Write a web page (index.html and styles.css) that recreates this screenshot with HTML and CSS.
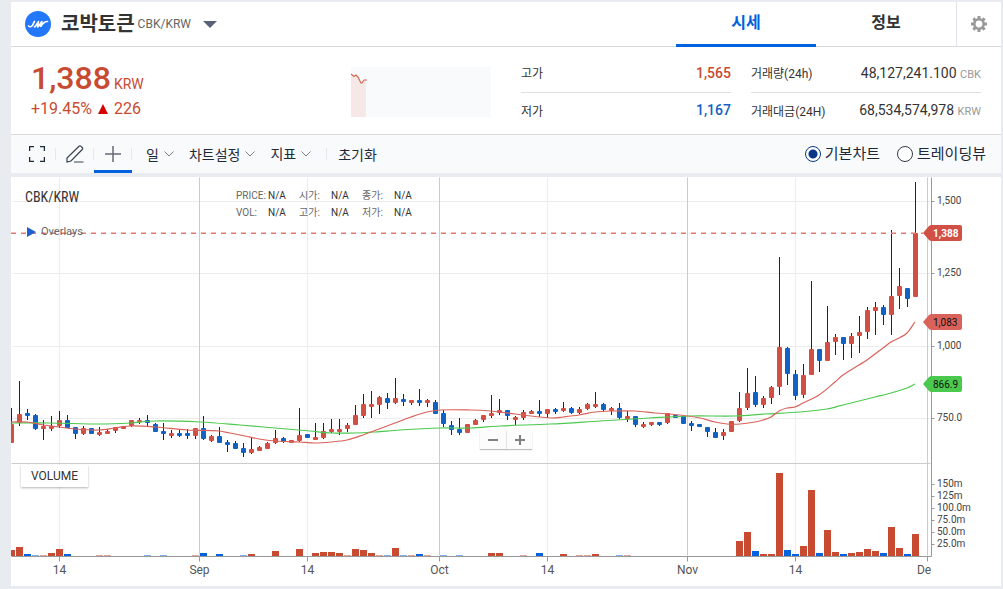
FILE: index.html
```html
<!DOCTYPE html>
<html lang="ko">
<head>
<meta charset="utf-8">
<meta name="viewport" content="width=device-width, initial-scale=1">
<title>코박토큰 CBK/KRW</title>
<link rel="stylesheet" href="styles.css">
</head>
<body>
<main class="page">
  <section class="panel">
    <header class="head">
      <svg class="logo" viewBox="0 0 26 26" aria-hidden="true">
        <circle cx="13" cy="13" r="13" fill="#2377fb"/>
        <path d="M3.600 15c1.200 1.200 3 1 4-.8l1.900-3.800M9.500 15.800c.8 0 1.600-1.600 4-5.200l-.9 5.200c1.100-.2 2.200-2.400 4.300-5.200l-1 4.800c1.600-2.600 3.300-5.200 6.600-4.900" fill="none" stroke="#fff" stroke-width="1.700" stroke-linecap="round" stroke-linejoin="round"/>
      </svg>
      <h1 class="name">코박토큰</h1>
      <span class="pair">CBK/KRW</span>
      <button class="pick" aria-label="코인 선택"><svg width="14" height="7" viewBox="0 0 14 7"><path d="M0 0h14L7 7z" fill="#5a6275"/></svg></button>
      <nav class="tabs">
        <button class="tab tab-on">시세</button>
        <button class="tab">정보</button>
      </nav>
      <button class="gear" aria-label="설정">
        <svg width="16" height="16" viewBox="0 0 16 16"><circle cx="8" cy="8" r="4.700" fill="none" stroke="#999" stroke-width="2.600"/><path d="M8 0v3M8 13v3M0 8h3M13 8h3M2.350 2.350l2.100 2.100M11.550 11.550l2.100 2.100M2.350 13.650l2.100-2.100M11.550 4.450l2.100-2.100" stroke="#999" stroke-width="3"/></svg>
      </button>
    </header>

    <div class="summary">
      <div class="quote">
        <div class="price">1,388<span class="unit">KRW</span></div>
        <div class="change"><span>+19.45%</span><svg width="10" height="10" viewBox="0 0 10 10" aria-hidden="true"><path d="M5 0l5 10H0z" fill="#d60000"/></svg><span>226</span></div>
      </div>
      <svg class="spark" viewBox="0 0 140 50" aria-hidden="true">
        <rect width="140" height="50" fill="#f9fafc"/>
        <path d="M0 7l3 3 2-2 3 4 2 4h1l2-3h2V50H0z" fill="#f5e8e6"/>
        <path d="M0 7l3 2.500 2-1.500 2 2 3 6h1l2-3h3" fill="none" stroke="#d16450" stroke-width="1.200"/>
      </svg>
      <dl class="stats range">
        <div class="stat"><dt>고가</dt><dd class="up">1,565</dd></div>
        <div class="stat"><dt>저가</dt><dd class="down">1,167</dd></div>
      </dl>
      <dl class="stats totals">
        <div class="stat"><dt>거래량(24h)</dt><dd>48,127,241.100 <small>CBK</small></dd></div>
        <div class="stat"><dt>거래대금(24H)</dt><dd>68,534,574,978 <small>KRW</small></dd></div>
      </dl>
    </div>

    <div class="toolbar">
      <button class="tool" aria-label="전체화면"><svg width="16" height="16" viewBox="0 0 16 16"><path d="M.5 5V.5H5M11 .5h4.500V5M15.500 11v4.500H11M5 15.500H.5V11" fill="none" stroke="#1c2a3a" stroke-width="1.500"/></svg></button>
      <button class="tool" aria-label="그리기"><svg width="18" height="18" viewBox="0 0 18 18"><path d="M1 17v-4L13 1.300q1-1 2 0l1.200 1.200q1 1 0 2L5 16z M8 17h9.500" fill="none" stroke="#3a4350" stroke-width="1.200"/></svg></button>
      <button class="tool tool-on" aria-label="십자선"><svg width="16" height="16" viewBox="0 0 16 16"><path d="M8 0v16M0 8h16" stroke="#666a77" stroke-width="1.500"/></svg></button>
      <button class="menu">일<svg class="chev" viewBox="0 0 10 6"><path d="M.5.5L5 5 9.500.5"/></svg></button>
      <button class="menu">차트설정<svg class="chev" viewBox="0 0 10 6"><path d="M.5.5L5 5 9.500.5"/></svg></button>
      <button class="menu menu-last">지표<svg class="chev" viewBox="0 0 10 6"><path d="M.5.5L5 5 9.500.5"/></svg></button>
      <button class="menu reset">초기화</button>
      <div class="modes">
        <label class="mode"><input type="radio" name="mode" checked>기본차트</label>
        <label class="mode"><input type="radio" name="mode">트레이딩뷰</label>
      </div>
    </div>
  </section>

  <section class="chart">
    <svg id="plot" class="plot" viewBox="11 177 990 409" role="img" aria-label="CBK/KRW 일봉 차트"></svg>
    <div class="symbol">CBK/KRW</div>
    <button class="overlays"><svg width="9" height="10" viewBox="0 0 9 10"><path d="M0 0l9 5-9 5z" fill="#1f5fd0"/></svg>Overlays</button>
    <dl class="legend">
      <dt>PRICE:</dt><dd>N/A</dd><dt>시가:</dt><dd>N/A</dd><dt>종가:</dt><dd>N/A</dd>
      <dt>VOL:</dt><dd>N/A</dd><dt>고가:</dt><dd>N/A</dd><dt>저가:</dt><dd>N/A</dd>
    </dl>
    <div class="volume">VOLUME</div>
    <div class="zoom">
      <button aria-label="축소"><svg width="10" height="10" viewBox="0 0 10 10"><path d="M0 5h10"/></svg></button>
      <button aria-label="확대"><svg width="10" height="10" viewBox="0 0 10 10"><path d="M0 5h10M5 0v10"/></svg></button>
    </div>
  </section>
</main>
<script src="chart.js"></script>
</body>
</html>
```

FILE: styles.css
```css
* { box-sizing: border-box; }

body {
  margin: 0;
  background: #e8ebf0;
  color: #333;
  font-family: Roboto, "Noto Sans CJK KR", sans-serif;
}

button {
  margin: 0;
  padding: 0;
  border: 0;
  background: none;
  color: inherit;
  font: inherit;
  cursor: pointer;
}

svg { display: block; }
dl, dd, h1 { margin: 0; }

.page {
  display: flex;
  flex-direction: column;
  gap: 4px;
  padding: 2px 2px 3px 11px;
}

.panel { background: #fff; }

.head {
  display: flex;
  align-items: center;
  height: 45px;
  padding-left: 14px;
  border-bottom: 1px solid #d9dadc;
}
.logo { width: 26px; height: 26px; }
.name {
  margin-left: 10px;
  font-size: 20px;
  line-height: 28px;
  font-weight: 700;
}
.pair { margin-left: 3px; font-size: 12px; color: #666; }
.pick { margin-left: 12px; }

.tabs { display: flex; align-self: stretch; margin-left: auto; }
.tab {
  width: 140px;
  height: 45px;
  border-bottom: 3px solid transparent;
  font-size: 16px;
  line-height: 38px;
  font-weight: 700;
}
.tab-on { border-bottom-color: #0062df; color: #0062df; }
.gear {
  display: grid;
  place-items: center;
  align-self: stretch;
  width: 45px;
  border-left: 1px solid #e0e2e7;
}

.summary {
  display: flex;
  height: 88px;
  padding: 0 20px;
  border-bottom: 1px solid #d9dadc;
}
.quote { width: 320px; padding-top: 12px; color: #c84a31; }
.price { height: 38px; font-size: 32px; line-height: 38px; font-weight: 500; }
.unit { margin-left: 3px; font-size: 14px; font-weight: 400; }
.change {
  display: flex;
  align-items: center;
  gap: 6px;
  height: 24px;
  font-size: 16px;
  line-height: 24px;
}
.spark { width: 140px; height: 50px; margin-top: 20px; }
.stats { margin-top: 8px; }
.range { width: 210px; margin-left: auto; }
.totals { width: 230px; margin-left: 20px; }
.stat {
  display: flex;
  align-items: center;
  justify-content: space-between;
  height: 34px;
  font-size: 14px;
}
.stat:first-child { height: 38px; padding-bottom: 2px; border-bottom: 1px solid #dfe0e6; }
.stat dt { font-size: 12px; }
.stat small { font-size: 11px; color: #999; }
.up { color: #c84a31; font-weight: 500; }
.down { color: #1261c4; font-weight: 500; }

.toolbar {
  display: flex;
  align-items: center;
  height: 38px;
  padding: 0 15px 0 7px;
  background: #f9fafc;
  color: #1c2a3a;
  font-size: 14px;
}
.tool {
  position: relative;
  display: grid;
  place-items: center;
  width: 38px;
  height: 38px;
}
.tool::after {
  content: "";
  position: absolute;
  top: 13px;
  right: 0;
  width: 1px;
  height: 12px;
  background: #e6e8ec;
}
.tool-on { border-top: 3px solid transparent; border-bottom: 3px solid #0062df; }
.tool-on::after { top: 10px; }
.menu {
  display: flex;
  align-items: center;
  gap: 5px;
  margin-left: 15px;
}
.tool-on + .menu { margin-left: 14px; }
.chev {
  width: 10px;
  height: 6px;
  fill: none;
  stroke: #7b808a;
}
.menu-last { padding-right: 15px; border-right: 1px solid #e6e8ec; line-height: 12px; }
.reset { margin-left: 11px; }
.modes { display: flex; gap: 17px; margin-left: auto; }
.mode {
  display: flex;
  align-items: center;
  gap: 4px;
  font-size: 15px;
  line-height: 20px;
}
.mode input {
  appearance: none;
  width: 16px;
  height: 16px;
  margin: 0;
  border: 1px solid #333a48;
  border-radius: 50%;
  background: #fff;
}
.mode input:checked {
  border-color: #093687;
  background: radial-gradient(circle, #093687 4px, #fff 5px);
}

.chart { position: relative; background: #fff; }
.plot { width: 100%; height: auto; font-family: Roboto, sans-serif; }
.grid { stroke: #ececec; }
.major { stroke: #ccc; }
.axis { stroke: #999; }
.wick { stroke: #1c2430; }
.rise { fill: #d14f44; }
.fall { fill: #1261c4; }
.vol-rise { fill: #c84a31; }
.vol-fall { fill: #0062df; }
.faint { opacity: .5; }
.avg { fill: none; stroke-width: 1.2; }
.avg-short { stroke: #d9625a; }
.avg-long { stroke: #4bc94f; }
.last { stroke: #df7a70; stroke-width: 1.4; stroke-dasharray: 5 5; }
.tick { font-size: 10px; fill: #444; }
.date { font-size: 12px; fill: #555; text-anchor: middle; }
.flag-last { fill: #d14f44; }
.flag-short { fill: #d9625a; }
.flag-long { fill: #4bc94f; }
.flag-text { font-size: 10px; fill: #111; }
.flag-text-last { fill: #fff; font-weight: 700; }

.symbol {
  position: absolute;
  top: 12px;
  left: 14px;
  font-family: "Roboto Condensed", Roboto, sans-serif;
  font-size: 14px;
  line-height: 16px;
}
.overlays {
  position: absolute;
  top: 47px;
  left: 16px;
  display: flex;
  align-items: center;
  gap: 5px;
  font-size: 11px;
  line-height: 16px;
  color: #666;
}
.legend {
  position: absolute;
  top: 10px;
  left: 225px;
  display: grid;
  grid-template-columns: repeat(3, 32px 31px);
  font-size: 10px;
  line-height: 17px;
}
.legend dt { color: #666; }
.volume {
  position: absolute;
  top: 288px;
  left: 10px;
  padding: 0 10px;
  background: #fff;
  box-shadow: 0 1px 2px rgba(0, 0, 0, .3);
  font-size: 12px;
  line-height: 22px;
}
.zoom {
  position: absolute;
  top: 254px;
  left: 469px;
  display: flex;
  background: #fcfcfc;
  box-shadow: 0 1px 1px rgba(0, 0, 0, .25);
}
.zoom button { display: grid; place-items: center; width: 26px; height: 18px; }
.zoom button + button { border-left: 1px solid #e4e4e4; }
.zoom path { stroke: #808080; stroke-width: 2; }
```

FILE: chart.js
```js
// One entry per day: high, body top, body bottom, low, direction (r = rise, f = fall), volume.
const days = `
408 424 443 443 r 6|381 414 423 426 r 9|409 413 416 420 f 2|414 415 429 430 f 1|420 426 429 440 r 1|416 426 429 431 r 3
411 420 426 428 r 7|415 420 428 428 f 2|427 427 434 439 f 0|426 428 434 435 r 0|428 428 434 434 f 0|427 432 435 436 r 1
429 431 434 434 r 1|427 427 431 433 r 0|426 426 429 429 r 0|420 420 426 427 r 0|418 420 422 424 r 0|415 420 423 426 f 1
423 424 432 432 f 0|423 431 434 440 f 1|430 433 436 438 r 0|430 433 436 437 f 0|429 433 436 439 f 0|428 428 436 439 r 1
416 428 439 440 f 3|435 436 441 442 r 0|427 436 443 443 f 2|440 442 445 452 f 0|441 443 449 449 f 0|443 448 453 457 f 1
438 449 453 454 r 2|446 447 451 451 r 0|442 443 449 449 r 0|430 438 443 444 r 5|437 438 442 443 f 0|440 440 443 443 r 0
408 435 441 442 r 7|434 434 438 438 f 0|423 437 440 440 r 3|423 431 438 439 r 4|419 429 432 433 r 4|419 429 432 435 r 3
423 425 429 432 r 1|405 415 425 425 r 7|394 404 416 418 r 6|391 404 407 418 r 3|396 397 405 414 r 1|393 398 403 409 f 1
378 398 403 404 r 8|394 399 402 406 f 1|400 400 403 405 r 1|389 400 403 406 f 2|399 400 403 407 r 1|400 402 414 414 f 0
410 413 424 427 f 1|421 425 430 435 f 0|418 429 433 435 f 1|424 424 433 433 r 0|419 420 425 425 r 0|415 415 420 422 r 0
395 413 416 418 r 3|399 410 413 415 r 3|410 410 416 420 f 0|416 417 420 425 r 0|410 412 418 420 r 1|410 411 414 414 r 0
400 411 414 417 f 3|409 409 414 418 r 0|408 409 412 414 f 0|402 408 411 412 r 2|407 408 413 414 f 0|407 409 413 414 r 1
403 404 409 410 r 1|392 404 407 408 r 2|403 404 410 411 f 0|407 408 411 415 r 0|403 408 418 419 f 1|411 416 419 422 r 1
416 416 425 427 f 0|422 424 427 428 r 0|422 422 425 426 r 0|422 422 425 426 f 0|413 413 423 424 r 0|415 415 418 418 f 0
416 416 424 424 f 0|421 423 426 431 f 0|424 424 427 427 f 0|427 427 432 437 f 0|428 432 438 438 f 0|429 432 436 440 r 0
421 421 432 432 r 0|392 408 421 422 r 15|368 393 408 410 r 24|376 392 405 407 f 5|396 398 405 408 r 2|386 387 398 404 r 2
257 347 387 395 r 83|347 348 374 385 f 6|370 374 396 400 f 2|364 375 395 398 r 10|281 349 375 375 r 66|349 349 361 372 f 3
306 342 361 361 r 26|334 337 342 355 r 4|337 337 344 360 f 2|333 336 344 358 r 3|316 332 336 353 r 4|307 310 332 339 r 7
302 307 311 335 r 5|305 307 315 325 f 3|230 296 315 335 r 29|268 286 296 309 r 8|288 288 299 307 f 2|182 233 297 297 r 22`
  .trim().split(/[|\n]/).map(d => d.split(' '));

const shortAvg = '11,422 27,422 43,425 59,427 75,429 99,430 115,428 131,426 155,427 187,430 219,431 230,433 245,436 259,439 275,441 299,442 315,443 331,442 347,440 363,435 379,429 395,423 411,417 427,412 440,410 470,410 490,411 515,414 540,417 552,418 563,417 579,415 595,412 611,411 635,411 655,413 680,415 700,418 715,422 727,424 740,424 755,422 763,420 771,417 779,411 787,408 795,407 803,403 819,395 835,382 843,375 859,365 867,360 883,348 891,342 899,338 907,333 915,322';
const longAvg = '11,423 50,423 100,424 130,423 155,421 200,422 240,425 275,428 310,431 331,433 355,433 375,432 400,430 440,428 470,428 500,426 550,424 600,421 650,418 690,416 735,416 765,414 800,412 827,409 843,405 859,401 875,397 891,393 907,388 915,384';

const line = (x1, y1, x2, y2, cls) => `<path class="${cls}" d="M${x1 + .5} ${y1 + .5}L${x2 + .5} ${y2 + .5}"/>`;
const text = (x, y, s, cls) => `<text x="${x}" y="${y}" class="${cls}">${s}</text>`;

// Smooth curve through a list of "x,y" points.
const curve = (list, cls) => {
  const p = list.split(' ').map(s => s.split(',').map(Number));
  let d = `M${p[0]}`;
  for (let i = 0; i < p.length - 1; i++) {
    const a = p[i - 1] || p[i], b = p[i], c = p[i + 1], e = p[i + 2] || c;
    const third = (c[0] - b[0]) / 3;
    const slopeB = (c[1] - a[1]) / (c[0] - a[0]);
    const slopeC = (e[1] - b[1]) / (e[0] - b[0]);
    d += `C${b[0] + third} ${b[1] + slopeB * third} ${c[0] - third} ${c[1] - slopeC * third} ${c}`;
  }
  return `<path class="avg ${cls}" d="${d}"/>`;
};

let out = '';
[201, 273, 346, 418].forEach(y => { out += line(12, y, 930, y, 'grid'); });
[59, 307, 547, 795].forEach(x => { out += line(x, 177, x, 555, 'grid'); });
[199, 439, 687, 927].forEach(x => { out += line(x, 177, x, 555, 'major'); });
out += line(11, 463, 930, 463, 'major');

days.forEach(([high, top, bottom, low, dir, vol], i) => {
  const x = 11 + 8 * i;
  const rise = dir === 'r';
  out += `<path class="wick" d="M${x + .5} ${high}V${low}"/>`;
  out += `<rect class="${rise ? 'rise' : 'fall'}" x="${x - 2}" y="${top}" width="5" height="${bottom - top}" rx="1"/>`;
  if (+vol) {
    out += `<rect class="${rise ? 'vol-rise' : 'vol-fall'}${vol === '1' ? ' faint' : ''}" x="${x - 3}" y="${556 - vol}" width="7" height="${vol}"/>`;
  }
});

out += curve(longAvg, 'avg-long') + curve(shortAvg, 'avg-short');
out += '<path class="last" d="M11 233.3H923"/>';
out += line(931, 177, 931, 556, 'axis') + line(11, 556, 931, 556, 'axis');

[[201, '1,500'], [273, '1,250'], [346, '1,000'], [418, '750.0'],
 [484, '150m'], [496, '125m'], [508, '100.0m'], [520, '75.0m'], [532, '50.0m'], [544, '25.0m']]
  .forEach(([y, s]) => { out += line(931, y, 934, y, 'axis') + text(937, y + 3, s, 'tick'); });

[[59, '14'], [199, 'Sep'], [307, '14'], [439, 'Oct'], [547, '14'], [687, 'Nov'], [795, '14'], [927, 'De']]
  .forEach(([x, s]) => { out += line(x, 556, x, 561, 'axis') + text(s === 'De' ? 924 : x + .5, 574, s, 'date'); });

[[233, '1,388', 'last'], [322, '1,083', 'short'], [384, '866.9', 'long']].forEach(([y, s, kind]) => {
  out += `<path class="flag-${kind}" d="M923 ${y}L929 ${y - 7}Q930 ${y - 8} 932 ${y - 8}H960Q962 ${y - 8} 962 ${y - 6}V${y + 6}Q962 ${y + 8} 960 ${y + 8}H932Q930 ${y + 8} 929 ${y + 7}Z"/>`;
  out += text(933, y + 4, s, `flag-text flag-text-${kind}`);
});

document.getElementById('plot').innerHTML = out;
```
